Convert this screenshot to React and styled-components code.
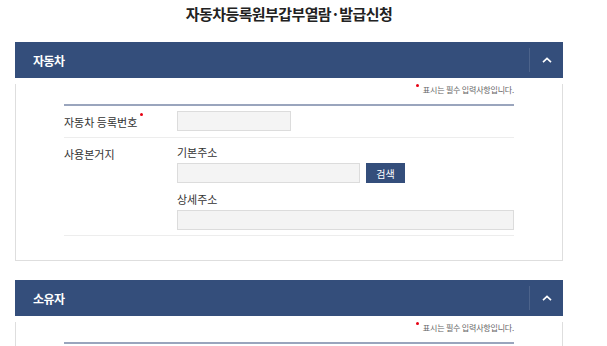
import React from "react";
import styled, { createGlobalStyle } from "styled-components";

const GlobalStyle = createGlobalStyle`
  body {
    margin: 0;
    background: #fff;
    font-family: "Noto Sans CJK KR", "Noto Sans", sans-serif;
    color: #333;
  }
`;

const ChevronUp = () => (
  <svg width="10" height="6" viewBox="0 0 10 6">
    <polyline points="1,5.2 5,1.4 9,5.2" fill="none" stroke="#fff" strokeWidth="1.6" />
  </svg>
);

const Section = ({ title, children }) => (
  <Panel>
    <Header>
      <HeaderTitle>{title}</HeaderTitle>
      <Toggle type="button" aria-label="접기">
        <ChevronUp />
      </Toggle>
    </Header>
    <Body>
      <Note>
        <Dot />표시는 필수 입력사항입니다.
      </Note>
      <Form>{children}</Form>
    </Body>
  </Panel>
);

const App = () => {
  return (
    <Page>
      <GlobalStyle />
      <Title>자동차등록원부갑부열람·발급신청</Title>

      <Section title="자동차">
        <Row>
          <Label>
            자동차 등록번호<Dot $after />
          </Label>
          <Input $width={114} />
        </Row>
        <Row $top>
          <Label>사용본거지</Label>
          <Fields>
            <Field>
              <SubLabel>기본주소</SubLabel>
              <InputLine>
                <Input $width={183} />
                <SearchButton type="button">검색</SearchButton>
              </InputLine>
            </Field>
            <Field>
              <SubLabel>상세주소</SubLabel>
              <Input />
            </Field>
          </Fields>
        </Row>
      </Section>

      <Section title="소유자" />
    </Page>
  );
};

export default App;

const Page = styled.div`
  width: 548px;
  margin-left: 15px;
  padding-top: 4px;
`;

const Title = styled.h1`
  margin: 0 0 18px;
  font-size: 15px;
  line-height: 20px;
  font-weight: 700;
  letter-spacing: -0.6px;
  text-align: center;
  color: #222;
`;

const Panel = styled.section`
  margin-bottom: 19px;
`;

const Header = styled.div`
  height: 36px;
  background: #344e7b;
  display: flex;
  align-items: center;
  justify-content: space-between;
  padding-left: 18px;
`;

const HeaderTitle = styled.h2`
  margin: 0;
  font-size: 12px;
  font-weight: 700;
  color: #fff;
  letter-spacing: -0.5px;
`;

const Toggle = styled.button`
  width: 34px;
  height: 24px;
  padding: 0;
  border: 0;
  border-left: 1px solid rgba(255, 255, 255, 0.12);
  background: transparent;
  display: flex;
  align-items: center;
  justify-content: center;
  cursor: pointer;
`;

const Body = styled.div`
  border: 1px solid #dedede;
  border-top: 0;
  padding: 0 48px 24px;
`;

const Note = styled.p`
  margin: 6px 0 8px;
  font-size: 8px;
  line-height: 12px;
  color: #666;
  text-align: right;
  letter-spacing: -0.2px;
`;

const Dot = styled.span`
  display: inline-block;
  width: 3px;
  height: 3px;
  border-radius: 50%;
  background: #e60012;
  vertical-align: top;
  margin: ${(p) => (p.$after ? "-2px 0 0 3px" : "0 4px 0 0")};
`;

const Form = styled.div`
  border-top: 2px solid #9aa5bd;
`;

const Row = styled.div`
  display: flex;
  align-items: ${(p) => (p.$top ? "flex-start" : "center")};
  padding: ${(p) => (p.$top ? "7px 0 5px" : "5px 0 6px")};
  border-bottom: 1px solid #ededed;
`;

const Label = styled.div`
  width: 113px;
  flex-shrink: 0;
  font-size: 11px;
  line-height: 14px;
  color: #333;
  padding-top: 2px;
`;

const Fields = styled.div`
  flex: 1;
  display: flex;
  flex-direction: column;
  gap: 9px;
`;

const Field = styled.div`
  display: flex;
  flex-direction: column;
  gap: 4px;
`;

const SubLabel = styled.div`
  font-size: 11px;
  line-height: 14px;
  color: #333;
`;

const InputLine = styled.div`
  display: flex;
  gap: 6px;
`;

const Input = styled.input`
  box-sizing: border-box;
  width: ${(p) => (p.$width ? `${p.$width}px` : "100%")};
  height: 20px;
  margin: 0;
  padding: 0 6px;
  border: 1px solid #dcdcdc;
  background: #f4f4f4;
  font: inherit;
  font-size: 11px;
`;

const SearchButton = styled.button`
  width: 39px;
  height: 20px;
  padding: 0;
  border: 0;
  background: #344e7b;
  color: #fff;
  font-family: inherit;
  font-size: 10px;
  cursor: pointer;
`;
